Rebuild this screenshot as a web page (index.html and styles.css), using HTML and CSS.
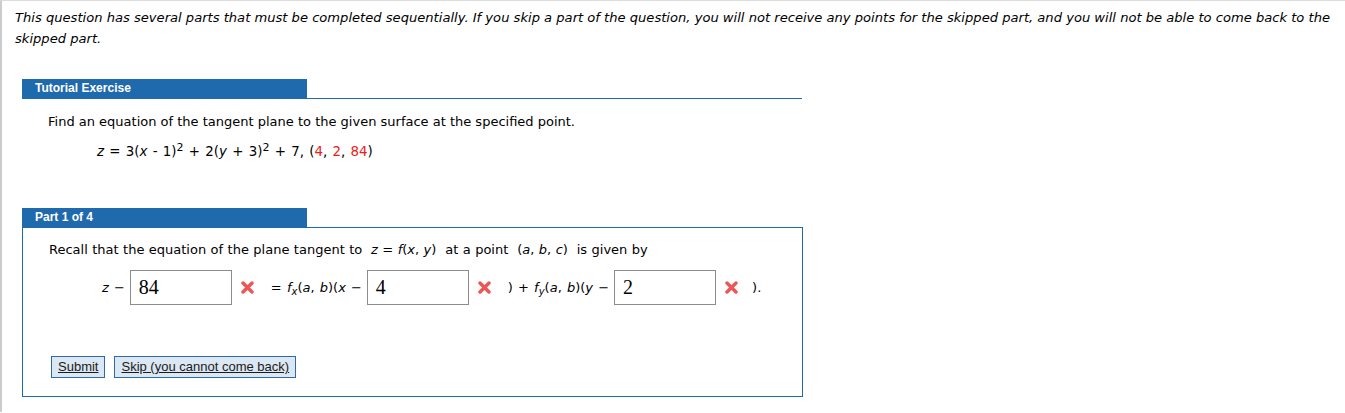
FILE: index.html
```html
<!DOCTYPE html>
<html>
<head>
<meta charset="utf-8">
<link rel="stylesheet" href="styles.css">
</head>
<body>
<div class="page">
  <p class="intro">This question has several parts that must be completed sequentially. If you skip a part of the question, you will not receive any points for the skipped part, and you will not be able to come back to the skipped part.</p>

  <div class="section tutorial">
    <div class="tab">Tutorial Exercise</div>
    <div class="rule"></div>
    <p class="prompt">Find an equation of the tangent plane to the given surface at the specified point.</p>
    <p class="equation"><i>z</i> = 3(<i>x</i> - 1)<sup>2</sup> + 2(<i>y</i> + 3)<sup>2</sup> + 7, (<span class="red">4</span>, <span class="red">2</span>, <span class="red">84</span>)</p>
  </div>

  <div class="section part">
    <div class="tab">Part 1 of 4</div>
    <div class="box">
      <p class="recall">Recall that the equation of the plane tangent to&nbsp; <i>z</i> = <i>f</i>(<i>x</i>, <i>y</i>)&nbsp; at a point&nbsp; (<i>a</i>, <i>b</i>, <i>c</i>)&nbsp; is given by</p>
      <div class="answer">
        <span class="lbl"><i>z</i> &minus;</span>
        <span class="field">84</span>
        <svg class="xmark" width="13" height="13" viewBox="0 0 13 13"><path d="M2 2 L11 11 M11 2 L2 11" stroke="#ee5555" stroke-width="3.4" stroke-linecap="round"/></svg>
        <span class="lbl">= <i>f</i><sub><i>x</i></sub>(<i>a</i>, <i>b</i>)(<i>x</i> &minus;</span>
        <span class="field">4</span>
        <svg class="xmark" width="13" height="13" viewBox="0 0 13 13"><path d="M2 2 L11 11 M11 2 L2 11" stroke="#ee5555" stroke-width="3.4" stroke-linecap="round"/></svg>
        <span class="lbl">) + <i>f</i><sub><i>y</i></sub>(<i>a</i>, <i>b</i>)(<i>y</i> &minus;</span>
        <span class="field">2</span>
        <svg class="xmark last" width="13" height="13" viewBox="0 0 13 13"><path d="M2 2 L11 11 M11 2 L2 11" stroke="#ee5555" stroke-width="3.4" stroke-linecap="round"/></svg>
        <span class="lbl">).</span>
      </div>
      <div class="buttons">
        <span class="btn">Submit</span>
        <span class="btn">Skip (you cannot come back)</span>
      </div>
    </div>
  </div>
</div>
</body>
</html>
```

FILE: styles.css
```css
html, body {
  margin: 0;
  padding: 0;
  background: #fff;
}
.page {
  height: 412px;
  border-top: 1px solid #dcdcdc;
  border-left: 2px solid #cccccc;
  padding: 6px 10px 0 13px;
  font-family: "DejaVu Sans", Verdana, sans-serif;
  font-size: 13px;
  color: #000;
  box-sizing: border-box;
}
.intro {
  margin: 0;
  font-style: italic;
  line-height: 21px;
  font-size: 13.1px;
}
.section {
  margin-left: 7px;
  width: 780px;
}
.tutorial {
  margin-top: 30px;
}
.tab {
  width: 272px;
  height: 19px;
  line-height: 19px;
  padding-left: 13px;
  background: #1f69ad;
  color: #fff;
  font-family: "Liberation Sans", Arial, sans-serif;
  font-weight: bold;
  font-size: 12px;
}
.rule {
  border-top: 1px solid #1f69ad;
}
.prompt {
  margin: 15px 0 0 26px;
  line-height: 16px;
}
.equation {
  margin: 13px 0 0 75px;
  line-height: 18px;
  font-size: 13.4px;
  word-spacing: 1px;
}
.equation sup {
  font-size: 11px;
  line-height: 0;
  vertical-align: 5px;
}
.red {
  color: #e8201a;
}
.part {
  margin-top: 47px;
}
.box {
  border: 1px solid #1f69ad;
  height: 170px;
  box-sizing: border-box;
  width: 781px;
}
.recall {
  margin: 14px 0 0 26px;
  line-height: 16px;
  word-spacing: 0.3px;
}
.answer {
  display: flex;
  align-items: center;
  margin: 12px 0 0 79px;
}
.lbl {
  white-space: nowrap;
  word-spacing: 1px;
}
.lbl sub {
  font-size: 10px;
  line-height: 0;
  vertical-align: -3px;
}
.field {
  width: 102px;
  height: 35px;
  box-sizing: border-box;
  border: 1px solid #8c8c8c;
  font-family: "Liberation Serif", "Times New Roman", serif;
  font-size: 20px;
  line-height: 32px;
  padding-left: 8px;
  margin-left: 5px;
}
.xmark {
  margin: 0 17px 0 9px;
}
.xmark.last {
  margin-right: 14px;
}
.buttons {
  display: flex;
  gap: 9px;
  margin: 51px 0 0 28px;
}
.btn {
  display: inline-block;
  height: 22px;
  line-height: 20px;
  box-sizing: border-box;
  padding: 0 6px;
  background: #dbe7f2;
  border: 1px solid #2f6aa6;
  font-family: "Liberation Sans", Arial, sans-serif;
  font-size: 13px;
  color: #1a1a1a;
  text-decoration: underline;
}
```
